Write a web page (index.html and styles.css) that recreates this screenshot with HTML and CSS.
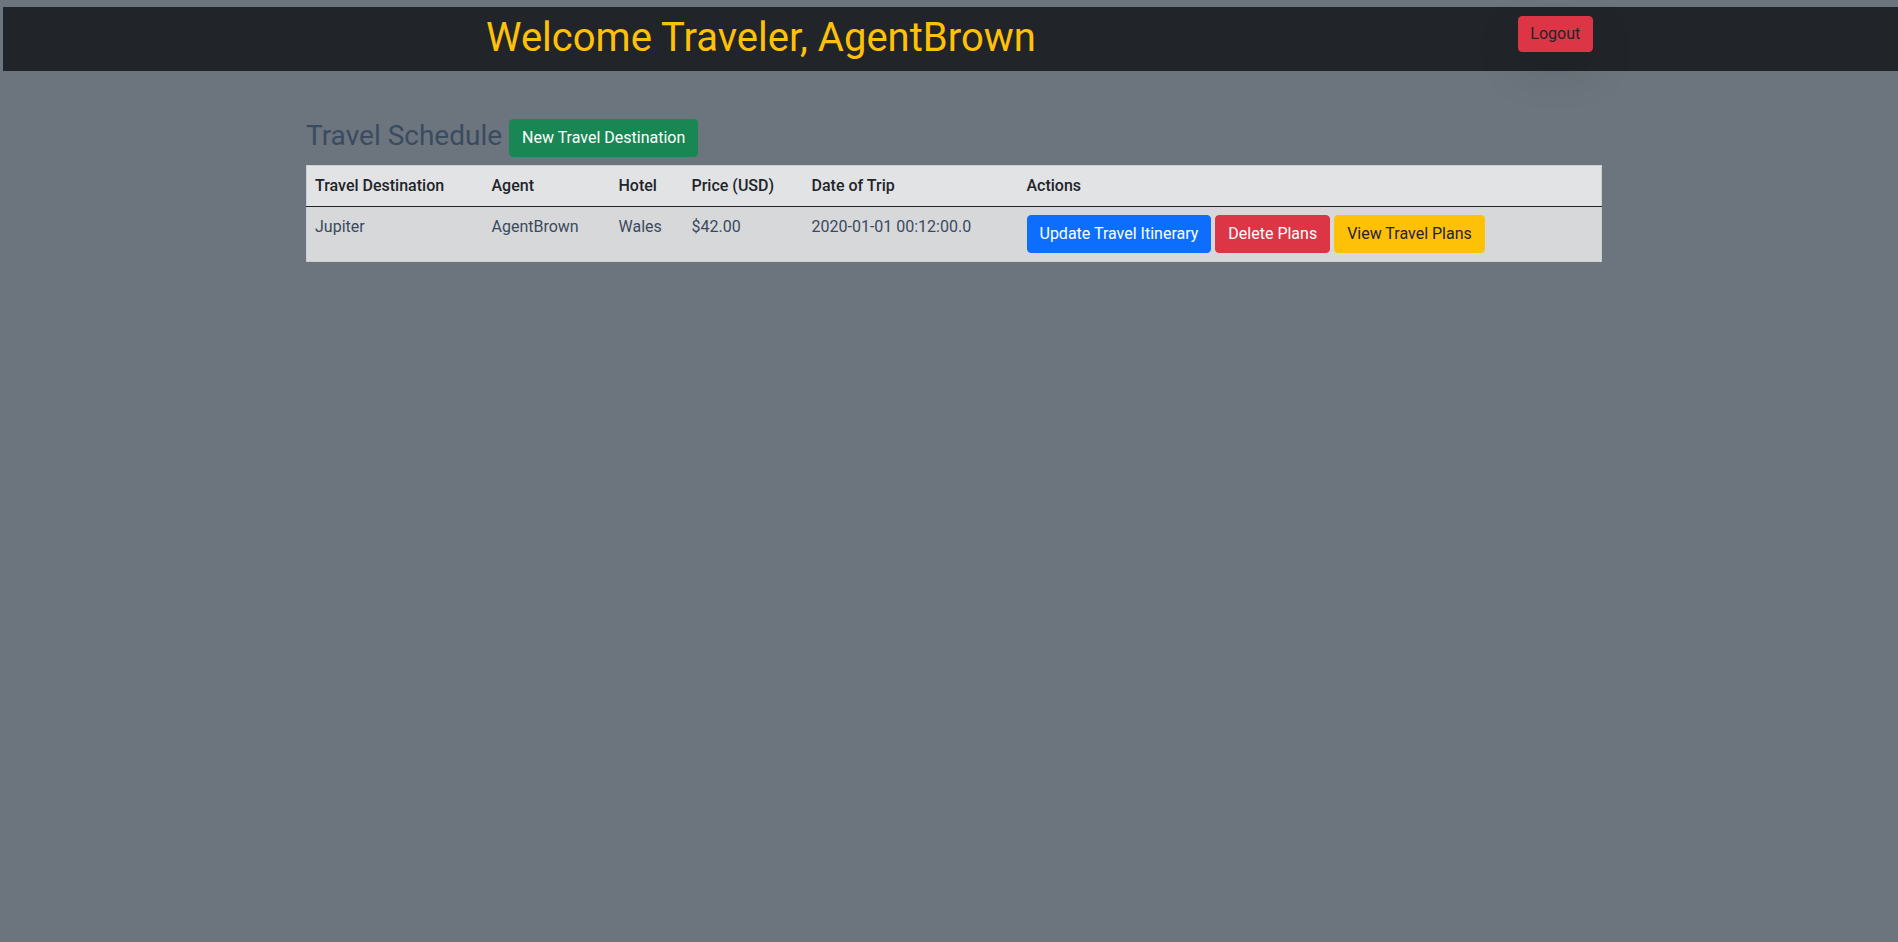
FILE: index.html
```html
<!DOCTYPE html>
<html lang="en">
<head>
<meta charset="utf-8">
<title>Travel Schedule</title>
<link rel="stylesheet" href="styles.css">
</head>
<body>
<header class="topbar">
  <h1 class="welcome">Welcome Traveler, AgentBrown</h1>
  <button class="btn btn-logout">Logout</button>
</header>
<main class="container">
  <div class="schedule-head">
    <h3 class="schedule-title">Travel Schedule</h3>
    <button class="btn btn-green">New Travel Destination</button>
  </div>
  <table class="trips">
    <colgroup>
      <col class="c-dest"><col class="c-agent"><col class="c-hotel"><col class="c-price"><col class="c-date"><col class="c-actions">
    </colgroup>
    <thead>
      <tr>
        <th>Travel Destination</th>
        <th>Agent</th>
        <th>Hotel</th>
        <th>Price (USD)</th>
        <th>Date of Trip</th>
        <th>Actions</th>
      </tr>
    </thead>
    <tbody>
      <tr>
        <td>Jupiter</td>
        <td>AgentBrown</td>
        <td>Wales</td>
        <td>$42.00</td>
        <td>2020-01-01 00:12:00.0</td>
        <td class="actions">
          <button class="btn btn-blue">Update Travel Itinerary</button>
          <button class="btn btn-red">Delete Plans</button>
          <button class="btn btn-yellow">View Travel Plans</button>
        </td>
      </tr>
    </tbody>
  </table>
</main>
</body>
</html>
```

FILE: styles.css
```css
html, body {
  margin: 0;
  padding: 0;
}
body {
  background: #6c757d;
  font-family: Roboto, "Liberation Sans", sans-serif;
  font-size: 16px;
  line-height: 1.5;
  color: #3a4a5e;
  min-height: 942px;
}
.topbar {
  margin: 7px 0 0 3px;
  height: 64px;
  box-sizing: border-box;
  background: #212529;
  display: flex;
  align-items: flex-start;
  padding-left: 483px;
}
.welcome {
  margin: 7px 0 0 0;
  font-size: 40px;
  font-weight: 400;
  line-height: 1.2;
  color: #ffc107;
}
.btn {
  font-family: Roboto, "Liberation Sans", sans-serif;
  font-size: 16px;
  line-height: 24px;
  padding: 6px 12px;
  border: 1px solid transparent;
  border-radius: 4px;
  cursor: pointer;
  vertical-align: middle;
}
.btn-logout {
  margin: 9px 0 0 482px;
  padding: 5px 11.5px;
  background: #dc3545;
  border-color: #dc3545;
  color: #212529;
  box-shadow: 0 16px 48px rgba(0, 0, 0, 0.12);
}
.container {
  width: 1296px;
  margin: 0 0 0 306px;
  padding-top: 48px;
}
.schedule-head {
  display: flex;
  align-items: flex-start;
  gap: 7px;
  margin-bottom: 8px;
}
.schedule-title {
  margin: 0;
  font-size: 28px;
  font-weight: 400;
  line-height: 1.2;
  color: #3a4b60;
}
.btn-green {
  background: #198754;
  border-color: #198754;
  color: #fff;
}
.trips {
  width: 1296px;
  table-layout: fixed;
  border-collapse: collapse;
  border: 1px solid #cdced0;
}
.c-dest { width: 177px; }
.c-agent { width: 127px; }
.c-hotel { width: 73px; }
.c-price { width: 120px; }
.c-date { width: 215px; }
.c-actions { width: auto; }
.trips th, .trips td {
  text-align: left;
  vertical-align: top;
  padding: 8px;
}
.trips thead tr {
  background: #e2e3e5;
}
.trips th {
  font-weight: 500;
  color: #212529;
  border-bottom: 1px solid #212529;
}
.trips tbody tr {
  background: #d7d8da;
}
.trips td {
  color: #3a4a5e;
}
.actions {
  white-space: nowrap;
}
.btn-blue {
  background: #0d6efd;
  border-color: #0d6efd;
  color: #fff;
}
.btn-red {
  background: #dc3545;
  border-color: #dc3545;
  color: #fff;
}
.btn-yellow {
  background: #ffc107;
  border-color: #ffc107;
  color: #212529;
}
```
